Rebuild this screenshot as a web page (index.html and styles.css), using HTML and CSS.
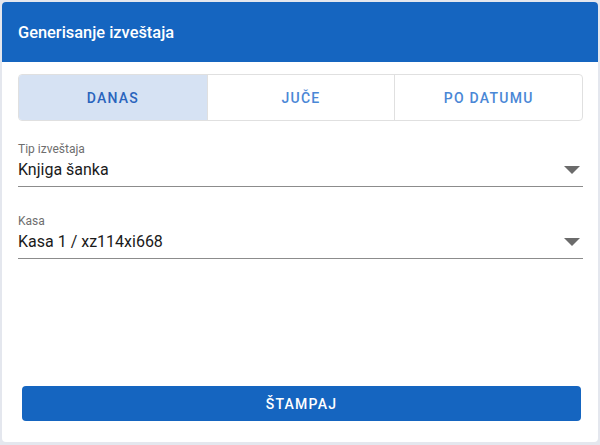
FILE: index.html
```html
<!DOCTYPE html>
<html>
<head>
<meta charset="utf-8">
<link rel="stylesheet" href="styles.css">
</head>
<body>
<div class="card">
  <div class="header">Generisanje izveštaja</div>
  <div class="content">
    <div class="tabs">
      <div class="tab active">DANAS</div>
      <div class="tab">JUČE</div>
      <div class="tab">PO DATUMU</div>
    </div>
    <div class="field first">
      <div class="label">Tip izveštaja</div>
      <div class="select">
        <span class="value">Knjiga šanka</span>
        <svg class="arrow" width="16" height="8" viewBox="0 0 16 8"><path d="M0 0 L16 0 L8 8 Z" fill="#6b6b6b"/></svg>
      </div>
    </div>
    <div class="field">
      <div class="label">Kasa</div>
      <div class="select">
        <span class="value">Kasa 1 / xz114xi668</span>
        <svg class="arrow" width="16" height="8" viewBox="0 0 16 8"><path d="M0 0 L16 0 L8 8 Z" fill="#6b6b6b"/></svg>
      </div>
    </div>
    <button class="btn">ŠTAMPAJ</button>
  </div>
</div>
</body>
</html>
```
FILE: styles.css
```css
html, body {
  margin: 0;
  padding: 0;
  background: #e4e7ee;
  font-family: Roboto, "Noto Sans", sans-serif;
}
.card {
  margin: 2px;
  width: 596px;
  height: 440px;
  background: #fff;
  border-radius: 4px;
  overflow: hidden;
  display: flex;
  flex-direction: column;
}
.header {
  height: 60px;
  background: #1565c0;
  color: #fff;
  font-size: 16.4px;
  font-weight: 500;
  display: flex;
  align-items: center;
  padding-left: 16px;
  flex-shrink: 0;
}
.content {
  flex: 1;
  display: flex;
  flex-direction: column;
  padding: 12px 15px 21px 16px;
}
.tabs {
  display: grid;
  grid-template-columns: 1fr 1fr 1fr;
  height: 45px;
  border: 1px solid #e0e0e0;
  border-radius: 4px;
  overflow: hidden;
}
.tab {
  display: flex;
  align-items: center;
  justify-content: center;
  font-size: 14px;
  font-weight: 500;
  letter-spacing: 1.25px;
  color: #4a87d6;
}
.tab + .tab {
  border-left: 1px solid #e0e0e0;
}
.tab.active {
  background: #d6e2f3;
  color: #2a64bd;
}
.field {
  margin-top: 27px;
}
.field.first {
  margin-top: 21px;
}
.label {
  font-size: 12px;
  color: #6e6e6e;
  line-height: 14px;
}
.select {
  display: flex;
  align-items: center;
  justify-content: space-between;
  height: 30px;
  border-bottom: 1px solid #8c8c8c;
}
.value {
  font-size: 16px;
  color: #1a1a1a;
  padding-bottom: 3px;
}
.arrow {
  margin-right: 3px;
  margin-top: -2px;
}
.btn {
  margin: auto 2px 0 4px;
  height: 35px;
  border: none;
  border-radius: 4px;
  background: #1565c0;
  color: #fff;
  font-family: Roboto, "Noto Sans", sans-serif;
  font-size: 14px;
  font-weight: 500;
  letter-spacing: 1.25px;
}
```
